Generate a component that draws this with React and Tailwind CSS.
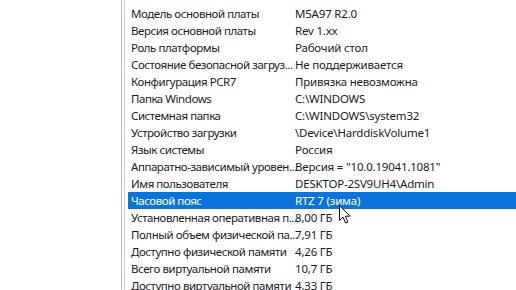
import * as React from "react";

const rows = [
    ["Модель основной платы", "M5A97 R2.0"],
    ["Версия основной платы", "Rev 1.xx"],
    ["Роль платформы", "Рабочий стол"],
    ["Состояние безопасной загруз...", "Не поддерживается"],
    ["Конфигурация PCR7", "Привязка невозможна"],
    ["Папка Windows", "C:\\WINDOWS"],
    ["Системная папка", "C:\\WINDOWS\\system32"],
    ["Устройство загрузки", "\\Device\\HarddiskVolume1"],
    ["Язык системы", "Россия"],
    ["Аппаратно-зависимый уровен...", "Версия = \"10.0.19041.1081\""],
    ["Имя пользователя", "DESKTOP-2SV9UH4\\Admin"],
    ["Часовой пояс", "RTZ 7 (зима)", true],
    ["Установленная оперативная п...", "8,00 ГБ"],
    ["Полный объем физической па...", "7,91 ГБ"],
    ["Доступно физической памяти", "4,26 ГБ"],
    ["Всего виртуальной памяти", "10,7 ГБ"],
    ["Доступно виртуальной памяти", "4,33 ГБ"],
];

function Cursor() {
    return (
        <svg width="12" height="19" viewBox="0 0 12 19" className="absolute left-[339px] top-[205px]">
            <path d="M0.5 0.5 L0.5 15.5 L4 12 L6.5 18 L8.8 17 L6.3 11.2 L11 11.2 Z" fill="#ffffff" stroke="#111" strokeWidth="1" />
        </svg>
    );
}

export default function App() {
    return (
        <div className="relative w-[516px] h-[290px] bg-white overflow-hidden flex" style={{ fontFamily: '"Noto Sans", "Open Sans", sans-serif' }}>
            <div className="w-[121px] shrink-0" />
            <div className="w-px shrink-0 bg-[#b9b9b9]" />
            <div className="w-[2px] shrink-0" />
            <div className="w-px shrink-0 bg-[#cdcdcd]" />
            <div className="flex-1 flex flex-col pt-[5px] pl-[3px]">
                {rows.map(([label, value, sel]) => (
                    <div
                        key={label}
                        className={"flex h-[17px] shrink-0 items-center text-[11.5px] leading-none " + (sel ? "bg-[#0a74da] text-white" : "text-[#1b1b1b]")}
                    >
                        <span className="w-[167px] shrink-0 pl-[3px] whitespace-nowrap tracking-[-0.45px]">{label}</span>
                        <span className="whitespace-nowrap tracking-[-0.2px]">{value}</span>
                    </div>
                ))}
            </div>
            <Cursor />
        </div>
    );
}
